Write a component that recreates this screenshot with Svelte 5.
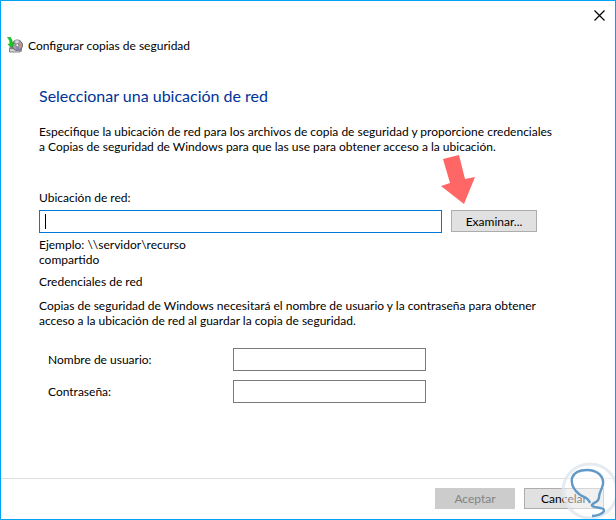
<script lang="ts">
  let location = $state('');
  let username = $state('');
  let password = $state('');

  let canAccept = $derived(location.trim() !== '');
</script>

<main class="window">
  <div class="titlebar">
    <button class="close" type="button" aria-label="Cerrar">
      <svg width="11" height="11" viewBox="0 0 11 11">
        <path d="M0.5 0.5L10.5 10.5M10.5 0.5L0.5 10.5" stroke="#000" stroke-width="1.2" />
      </svg>
    </button>
  </div>

  <header class="app-header">
    <svg class="app-icon" width="16" height="16" viewBox="0 0 16 16" aria-hidden="true">
      <path d="M2.5 9.5L5 7H13L15 11V14.5H2.5Z" fill="#8d8d8d" />
      <path d="M2.5 11.5H13V15H2.5Z" fill="#d2d2d2" stroke="#6e6e6e" stroke-width="0.8" />
      <circle cx="10.3" cy="8.2" r="5.2" fill="#a39da8" stroke="#68636b" stroke-width="1" />
      <path d="M10.3 8.2L7.6 4A5 5 0 0 1 12 3.6Z" fill="#dedae2" />
      <path d="M10.3 8.2L14.6 6.2A5 5 0 0 1 14.6 10.2Z" fill="#d08d78" />
      <path d="M10.3 8.2L12.5 12.4A5 5 0 0 1 8.5 12.8Z" fill="#8883b8" />
      <circle cx="10.3" cy="8.2" r="1.5" fill="#fff" stroke="#69656c" stroke-width="0.8" />
      <path d="M0.3 0.5L3 0C4.8 2 5.5 4 5.5 6.2L7.4 6L4.8 10.6L0.8 7.2L2.9 6.8C3 4.2 2.2 2.2 0.3 0.5Z" fill="#14cc1e" stroke="#159d20" stroke-width="0.5" />
    </svg>
    <span>Configurar copias de seguridad</span>
  </header>

  <form class="content" id="network-form">
    <h1>Seleccionar una ubicación de red</h1>

    <p class="intro">
      Especifique la ubicación de red para los archivos de copia de seguridad y proporcione credenciales<br />
      a Copias de seguridad de Windows para que las use para obtener acceso a la ubicación.
    </p>

    <label class="location-label" for="location">Ubicación de red:</label>
    <div class="location-row">
      <div class="location-field">
        <input id="location" type="text" bind:value={location} />
        {#if !location}<span class="caret"></span>{/if}
      </div>
      <div class="browse">
        <button class="btn" type="button">Examinar...</button>
        <svg class="arrow" width="34" height="50" viewBox="0 0 34 50" aria-hidden="true">
          <path d="M2 4L18 0L24 24L34 22L23 49L0 31L9 28Z" fill="#ff6666" />
        </svg>
      </div>
    </div>
    <p class="example">Ejemplo: \\servidor\recurso<br />compartido</p>

    <h2>Credenciales de red</h2>
    <p>
      Copias de seguridad de Windows necesitará el nombre de usuario y la contraseña para obtener<br />
      acceso a la ubicación de red al guardar la copia de seguridad.
    </p>

    <div class="credentials">
      <label for="username">Nombre de usuario:</label>
      <input id="username" type="text" bind:value={username} />
      <label for="password">Contraseña:</label>
      <input id="password" type="password" bind:value={password} />
    </div>
  </form>

  <footer class="footer">
    <button class="btn" type="submit" form="network-form" disabled={!canAccept}>Aceptar</button>
    <button class="btn" type="button">Cancelar</button>
  </footer>

  <svg class="watermark" width="59" height="59" viewBox="0 0 59 59" aria-hidden="true">
    <circle cx="34" cy="31" r="27" fill="#fff" fill-opacity="0.35" stroke="#dfe6ec" stroke-opacity="0.8" stroke-width="3" />
    <circle cx="34" cy="31" r="24" fill="#fff" fill-opacity="0.25" />
    <path
      d="M34 43C32 37 28 38 23 34C18 30 15 24 16 18C18 12 24 10 31 10C41 10 48 16 47 24C46 30 43 32 43 37C43 43 37 42 36 45C35 48 48 47 48 50C48 54 40 56 36 56"
      fill="none" stroke="#6299c7" stroke-width="2.4" stroke-linejoin="round" />
  </svg>
</main>

<style>
  :global(body) {
    margin: 0;
    background: #fff;
  }

  .window {
    position: relative;
    display: flex;
    flex-direction: column;
    box-sizing: border-box;
    min-height: 100vh;
    overflow: hidden;
    border: 1px solid #00a2f3;
    background: #fff;
    color: #000;
    font-family: 'Segoe UI', Lato, sans-serif;
    font-size: 12px;
    line-height: 15px;
  }

  .titlebar {
    display: flex;
    justify-content: flex-end;
    height: 28px;
  }

  .close {
    display: flex;
    align-items: center;
    justify-content: center;
    width: 31px;
    padding: 0;
    border: 0;
    background: none;
  }

  .app-header {
    display: flex;
    align-items: center;
    gap: 5px;
    padding: 8px 6px 0;
  }

  .content {
    flex: 1;
    padding: 33px 38px 0;
  }

  h1 {
    margin: 0 0 18px;
    color: #003399;
    font-size: 16px;
    font-weight: 400;
    line-height: 20px;
  }

  h2 {
    margin: 0 0 9px;
    font-size: inherit;
    font-weight: 400;
  }

  p {
    margin: 0;
    white-space: nowrap;
  }

  .intro {
    margin-bottom: 36px;
  }

  .location-label {
    display: block;
    margin-bottom: 5px;
  }

  .location-row {
    display: flex;
    gap: 9px;
    margin-right: 40px;
  }

  .location-field {
    position: relative;
    flex: 1;
  }

  input {
    box-sizing: border-box;
    width: 100%;
    height: 23px;
    padding: 0 5px;
    border: 1px solid #7a7a7a;
    border-radius: 0;
    outline: none;
    background: #fff;
    font: inherit;
  }

  .location-field input {
    display: block;
    border-color: #0078d7;
  }

  .caret {
    position: absolute;
    top: 4px;
    left: 6px;
    width: 1px;
    height: 15px;
    background: #000;
  }

  .btn {
    box-sizing: border-box;
    width: 80px;
    height: 21px;
    padding: 0;
    border: 1px solid #adadad;
    background: #e1e1e1;
    color: #000;
    font: inherit;
  }

  .btn:disabled {
    border-color: #cccccc;
    background: #cccccc;
    color: #838383;
  }

  .browse {
    position: relative;
  }

  .browse .btn {
    display: block;
    width: 86px;
    height: 22px;
  }

  .arrow {
    position: absolute;
    bottom: 28px;
    left: -10px;
  }

  .example {
    margin: 4px 0 7px;
  }

  .credentials {
    display: grid;
    grid-template-columns: 176px 193px;
    gap: 9px;
    align-items: center;
    padding: 20px 9px 0;
  }

  .footer {
    display: flex;
    justify-content: flex-end;
    gap: 9px;
    padding: 9px 11px 10px;
    border-top: 1px solid #dfdfdf;
  }

  .watermark {
    position: absolute;
    right: 0;
    bottom: 0;
    pointer-events: none;
  }
</style>
